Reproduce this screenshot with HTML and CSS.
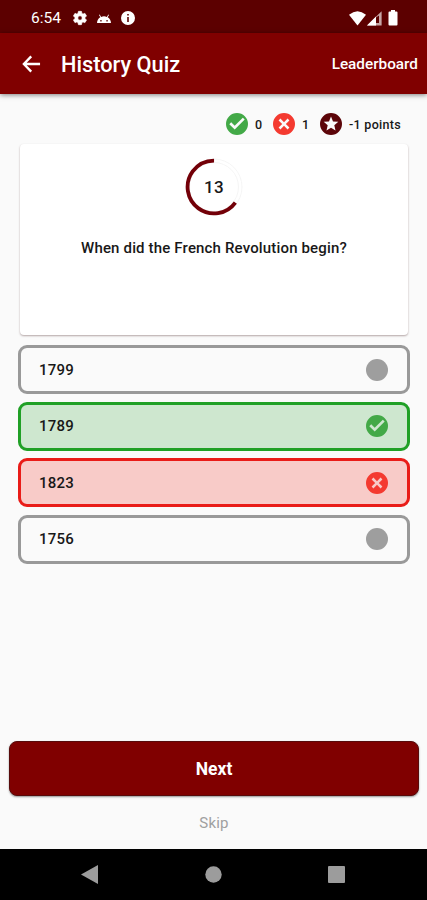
FILE: index.html
```html
<!DOCTYPE html>
<html lang="en">
<head>
<meta charset="utf-8">
<title>History Quiz</title>
<link rel="stylesheet" href="styles.css">
</head>
<body>
<svg class="defs" aria-hidden="true">
  <symbol id="check" viewBox="0 0 24 24"><path d="M12 1a11 11 0 1 0 0 22 11 11 0 0 0 0-22zM9.7 17.6 4.300 12.200l1.900-1.900 3.500 3.500 8.100-8.100 1.900 1.900z"/></symbol>
  <symbol id="cross" viewBox="0 0 24 24"><path d="M12 1a11 11 0 1 0 0 22 11 11 0 0 0 0-22zM17.400 15.600l-1.800 1.800-3.600-3.600-3.600 3.600-1.800-1.800 3.600-3.600-3.600-3.600 1.800-1.800 3.600 3.600 3.600-3.600 1.800 1.800-3.600 3.600z"/></symbol>
  <symbol id="star" viewBox="0 0 24 24"><path d="M12 1a11 11 0 1 0 0 22 11 11 0 0 0 0-22zM16.500 18.500 12 15.700l-4.500 2.800 1.200-5.200-4-3.500 5.300-.4L12 4.500l2 4.900 5.300.4-4 3.500z"/></symbol>
</svg>
<div class="status">
  <span class="time">6:54</span>
  <svg class="gear" viewBox="0 0 24 24"><path d="M19.4 13c.1-.3.1-.6.1-1s0-.7-.1-1l2.1-1.600c.2-.2.200-.4.100-.6l-2-3.500c-.1-.2-.4-.3-.6-.2l-2.500 1c-.5-.4-1.100-.7-1.700-1L14.400 2.400c0-.2-.2-.4-.5-.4h-4c-.2 0-.4.200-.5.400L9 5.100c-.6.200-1.200.6-1.700 1l-2.400-1c-.2-.1-.5 0-.6.200l-2 3.500c-.1.200-.1.500.1.600L4.500 11v2l-2.100 1.600c-.2.100-.2.400-.1.600l2 3.500c.1.200.4.300.6.200l2.400-1c.5.400 1.100.7 1.700 1l.4 2.700c.1.200.300.4.500.4h4c.3 0 .5-.2.500-.4l.4-2.700c.6-.3 1.200-.6 1.700-1l2.500 1c.2.100.5 0 .6-.2l2-3.500c.1-.2.100-.5-.1-.6zM12 15.300a3.300 3.300 0 1 1 0-6.600 3.300 3.300 0 0 1 0 6.600z" stroke="#fff"/></svg>
  <svg class="droid" viewBox="0 0 14 9"><path d="M0 9a7 7 0 0 1 3.300-5.700L2 1l.7-.4 1.400 2.300a7 7 0 0 1 5.800 0L11.300.6l.7.400-1.300 2.300A7 7 0 0 1 14 9zM3.300 6.100v1.300h1.300V6.100zM9.400 6.100v1.300h1.300V6.100z" fill-rule="evenodd"/></svg>
  <svg class="info" viewBox="0 0 14 14"><path d="M7 0a7 7 0 1 0 0 14A7 7 0 0 0 7 0zM6.200 3h1.600v1.600H6.200zM6.200 6h1.600v5H6.200z" fill-rule="evenodd"/></svg>
  <div class="signals">
    <svg width="17" height="15" viewBox="0 0 17 15"><path d="M0 3.800Q8.500-3.400 17 3.800L8.500 14.500z"/></svg>
    <svg width="15" height="15" viewBox="0 0 15 15"><path d="M14.600.2v14.300H0z" opacity=".65"/><path d="M9 5.600v8.900H0z"/><path d="M9 6.500v5.500h3V4.500z" fill="#5c0000"/></svg>
    <svg class="battery" width="10" height="16" viewBox="0 0 10 16"><path d="M3 0h4v1.500h1.500q1 0 1 1v12q0 1-1 1h-7q-1 0-1-1v-12q0-1 1-1H3z"/></svg>
  </div>
</div>
<header class="appbar">
  <svg class="back" viewBox="0 0 20 18"><path d="M19 9H2M9.700 1 2 9l7.700 8"/></svg>
  <h1>History Quiz</h1>
  <span class="leader">Leaderboard</span>
</header>
<main>
  <div class="stats">
    <svg class="badge green"><use href="#check"/></svg><span class="count">0</span>
    <svg class="badge red"><use href="#cross"/></svg><span class="count">1</span>
    <svg class="badge maroon"><use href="#star"/></svg><span class="points">-1 points</span>
  </div>
  <section class="card">
    <div class="timer">
      <svg viewBox="0 0 58 58"><circle class="track" cx="29" cy="29" r="28"/><circle class="track" cx="29" cy="29" r="24.500"/><circle class="progress" cx="29" cy="29" r="26.400" pathLength="100" stroke-dasharray="65 35" transform="rotate(36 29 29)"/></svg>
      <span>13</span>
    </div>
    <p class="question">When did the French Revolution begin?</p>
  </section>
  <div class="options">
    <div class="option"><span>1799</span><i class="dot"></i></div>
    <div class="option right"><span>1789</span><svg class="badge green"><use href="#check"/></svg></div>
    <div class="option wrong"><span>1823</span><svg class="badge red"><use href="#cross"/></svg></div>
    <div class="option"><span>1756</span><i class="dot"></i></div>
  </div>
  <div class="next">Next</div>
  <div class="skip">Skip</div>
</main>
<nav>
  <svg width="17" height="19" viewBox="0 0 17 19"><path d="M17 0v19L0 9.500z"/></svg>
  <svg width="17" height="17" viewBox="0 0 17 17"><circle cx="8.500" cy="8.500" r="8.200"/></svg>
  <svg width="17" height="17" viewBox="0 0 17 17"><rect width="17" height="17" rx="1"/></svg>
</nav>
</body>
</html>
```
FILE: styles.css
```css
* { box-sizing: border-box; }
body {
  margin: 0;
  height: 900px;
  display: flex;
  flex-direction: column;
  overflow: hidden;
  background: #fafafa;
  color: #181818;
  font-family: Roboto, "Liberation Sans", sans-serif;
  font-weight: 500;
}
svg { display: block; flex: none; }
.defs { position: absolute; width: 0; height: 0; }
.status {
  height: 33px;
  flex: none;
  display: flex;
  align-items: center;
  padding: 3px 29px 0 31px;
  background: #5c0000;
  color: #fff;
  fill: #fff;
}
.time { width: 41px; font-size: 15.5px; font-weight: 400; }
.gear { width: 16px; height: 16px; margin-right: 9px; }
.droid { width: 14px; height: 9px; margin-right: 10px; }
.info { width: 14px; height: 14px; }
.signals { margin-left: auto; display: flex; align-items: center; gap: 1px; }
.battery { margin-left: 5px; }
.appbar {
  height: 61px;
  flex: none;
  display: flex;
  align-items: center;
  padding: 0 9px 0 22px;
  background: #800000;
  color: #fff;
  box-shadow: 0 1px 5px rgba(0, 0, 0, .5);
}
.back { width: 19px; height: 18px; margin-right: 20px; fill: none; stroke: #fff; stroke-width: 2.5; }
h1 { margin: 0; padding-top: 1px; font-size: 21.8px; font-weight: 500; }
.leader { margin-left: auto; font-size: 15.3px; }
main { flex: 1; display: flex; flex-direction: column; padding: 19px 8px 0 9px; }
.stats {
  height: 22px;
  display: flex;
  align-items: center;
  padding-left: 216px;
  font-size: 12.5px;
}
.badge { width: 24px; height: 24px; }
.green { fill: #43a947; }
.red { fill: #f43a30; }
.maroon { fill: #5c0509; }
.count { width: 23px; padding-left: 6px; }
.points { padding-left: 6px; letter-spacing: .3px; }
.card {
  height: 191px;
  margin: 9px 11px 0;
  padding-top: 14px;
  display: flex;
  flex-direction: column;
  align-items: center;
  background: #fff;
  border-radius: 4px;
  box-shadow: 0 1px 2px rgba(50, 10, 10, .35);
}
.timer { display: grid; place-items: center; width: 58px; height: 58px; }
.timer > * { grid-area: 1 / 1; }
.timer span { font-size: 17px; letter-spacing: .3px; }
.track { fill: none; stroke: #f3f3f3; stroke-width: .8; }
.progress { fill: none; stroke: #730008; stroke-width: 3.800; }
.question { margin: 22px 0 0; font-size: 15px; line-height: 20px; letter-spacing: .16px; }
.options { display: flex; flex-direction: column; gap: 7.5px; margin: 10px 9px 0; }
.option {
  height: 49px;
  display: flex;
  align-items: center;
  justify-content: space-between;
  padding: 0 18.500px 0 18px;
  border: 3px solid #999;
  border-radius: 9px;
  font-size: 15px;
  letter-spacing: .25px;
}
.option.right { background: #cee7cf; border-color: #20a026; }
.option.wrong { background: #f8cbc8; border-color: #e91c18; }
.dot { width: 22px; height: 22px; margin-right: 1px; border-radius: 50%; background: #9e9e9e; }
.next {
  height: 55px;
  margin-top: auto;
  display: flex;
  align-items: center;
  justify-content: center;
  background: #800000;
  color: #fff;
  border: 1px solid #570b0b;
  border-radius: 8px;
  box-shadow: 0 1px 2px rgba(0, 0, 0, .4);
  font-size: 17.5px;
  font-weight: 700;
}
.skip { height: 53px; line-height: 54px; text-align: center; color: #a0a0a0; font-size: 15px; font-weight: 400; letter-spacing: .2px; }
nav {
  height: 51px;
  flex: none;
  display: flex;
  align-items: center;
  justify-content: space-between;
  padding: 0 82px 0 81px;
  background: #000;
  fill: #9c9c9c;
}
```
